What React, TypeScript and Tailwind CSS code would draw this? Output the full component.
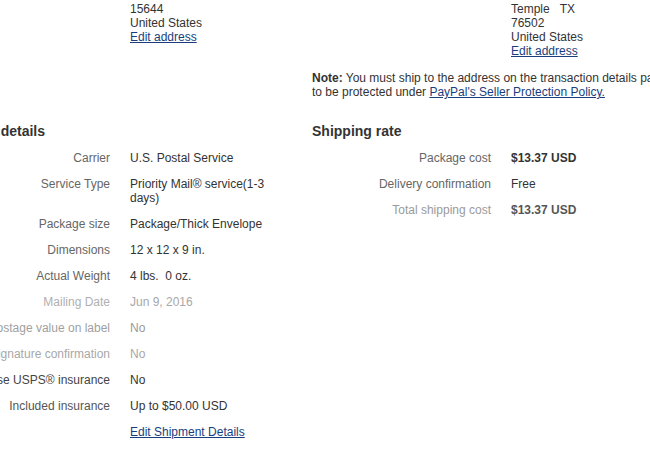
import React from 'react';

type Row = {
  label: string;
  value: React.ReactNode;
  labelClass?: string;
  valueClass?: string;
};

const shipmentRows: Row[] = [
  { label: 'Carrier', value: 'U.S. Postal Service' },
  { label: 'Service Type', value: 'Priority Mail® service(1-3 days)' },
  { label: 'Package size', value: 'Package/Thick Envelope' },
  { label: 'Dimensions', value: '12 x 12 x 9 in.' },
  { label: 'Actual Weight', value: <>4 lbs.&nbsp; 0 oz.</> },
  { label: 'Mailing Date', value: 'Jun 9, 2016', labelClass: 'text-[#b0b0b0]', valueClass: 'text-[#a8a8a8]' },
  { label: 'Display postage value on label', value: 'No', labelClass: 'text-[#a0a0a0]', valueClass: 'text-[#9a9a9a]' },
  { label: 'Require signature confirmation', value: 'No', labelClass: 'text-[#a8a8a8]', valueClass: 'text-[#a8a8a8]' },
  { label: 'Purchase USPS® insurance', value: 'No', labelClass: 'text-[#444]', valueClass: 'text-[#333]' },
  { label: 'Included insurance', value: 'Up to $50.00 USD', labelClass: 'text-[#555]' },
  {
    label: '',
    value: (
      <a href="#" className="text-[#1a3e7d] underline">
        Edit Shipment Details
      </a>
    ),
  },
];

const rateRows: Row[] = [
  { label: 'Package cost', value: '$13.37 USD', valueClass: 'font-bold' },
  { label: 'Delivery confirmation', value: 'Free' },
  { label: 'Total shipping cost', value: '$13.37 USD', labelClass: 'text-[#9a9a9a]', valueClass: 'font-bold text-[#555]' },
];

function DetailRows({ rows, labelWidth, valueWidth }: { rows: Row[]; labelWidth: string; valueWidth: string }) {
  return (
    <div className="mt-[11px] flex flex-col gap-[12px]">
      {rows.map((row, i) => (
        <div key={i} className="flex items-start gap-[20px]">
          <div className={`${labelWidth} shrink-0 flex justify-end whitespace-nowrap ${row.labelClass ?? 'text-[#666]'}`}>
            {row.label}
          </div>
          <div className={`${valueWidth} shrink-0 ${row.valueClass ?? 'text-[#333]'}`}>{row.value}</div>
        </div>
      ))}
    </div>
  );
}

export default function App() {
  return (
    <div className="w-[650px] h-[457px] overflow-hidden bg-white font-['Liberation_Sans',Arial,sans-serif] text-[12px] leading-[14px] text-[#333]">
      <div className="-ml-[67px] pt-[2px]">
        {/* addresses + note */}
        <div className="flex items-start">
          <div className="w-[379px] shrink-0 pl-[197px]">
            <div>15644</div>
            <div>United States</div>
            <a href="#" className="text-[#1a3e7d] underline">
              Edit address
            </a>
          </div>
          <div className="shrink-0">
            <div className="pl-[199px]">
              <div>Temple&nbsp;&nbsp;&nbsp;TX</div>
              <div>76502</div>
              <div>United States</div>
              <a href="#" className="text-[#1a3e7d] underline">
                Edit address
              </a>
            </div>
            <p className="mt-[13px] whitespace-nowrap text-[#333]">
              <span className="font-bold">Note:</span> You must ship to the address on the transaction details page in order
              <br />
              to be protected under{' '}
              <a href="#" className="text-[#1a3e7d] underline">
                PayPal's Seller Protection Policy.
              </a>
            </p>
          </div>
        </div>

        {/* details + rate */}
        <div className="flex items-start mt-[24px]">
          <div className="w-[379px] shrink-0">
            <h2 className="text-[14px] leading-[17px] font-bold text-[#333] whitespace-nowrap">Shipment details</h2>
            <DetailRows rows={shipmentRows} labelWidth="w-[177px]" valueWidth="w-[142px]" />
          </div>
          <div className="shrink-0">
            <h2 className="text-[14px] leading-[17px] font-bold text-[#333]">Shipping rate</h2>
            <DetailRows rows={rateRows} labelWidth="w-[179px]" valueWidth="w-[140px]" />
          </div>
        </div>
      </div>
    </div>
  );
}
